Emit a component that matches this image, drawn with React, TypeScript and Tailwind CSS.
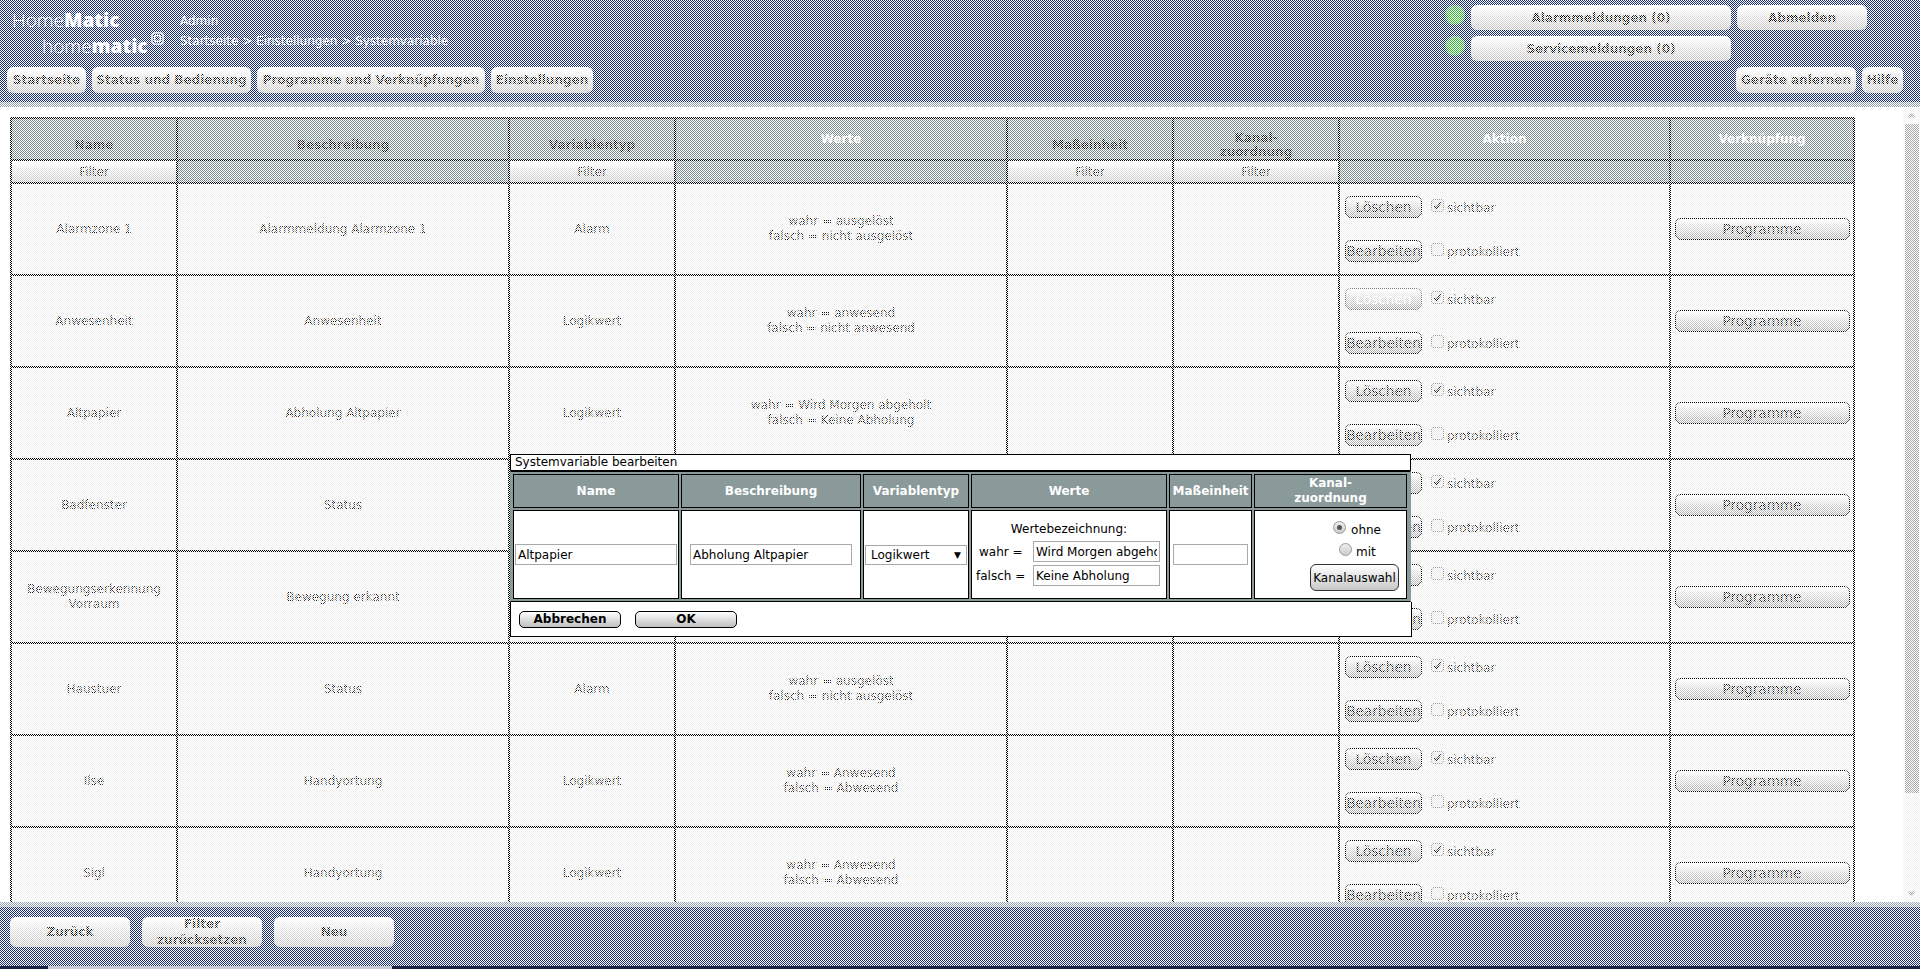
import React from 'react'

const dejavu = "font-['DejaVu_Sans',sans-serif]"

interface Row {
  name: string
  desc: string
  type: string
  values: string[]
  sichtbar: boolean
  deleteOff?: boolean
}

const rows: Row[] = [
  { name: 'Alarmzone 1', desc: 'Alarmmeldung Alarmzone 1', type: 'Alarm', values: ['wahr = ausgelöst', 'falsch = nicht ausgelöst'], sichtbar: true },
  { name: 'Anwesenheit', desc: 'Anwesenheit', type: 'Logikwert', values: ['wahr = anwesend', 'falsch = nicht anwesend'], sichtbar: true, deleteOff: true },
  { name: 'Altpapier', desc: 'Abholung Altpapier', type: 'Logikwert', values: ['wahr = Wird Morgen abgeholt', 'falsch = Keine Abholung'], sichtbar: true },
  { name: 'Badfenster', desc: 'Status', type: 'Alarm', values: ['wahr = offen', 'falsch = geschlossen'], sichtbar: true },
  { name: 'Bewegungserkennung Vorraum', desc: 'Bewegung erkannt', type: 'Alarm', values: ['wahr = ausgelöst', 'falsch = nicht ausgelöst'], sichtbar: false },
  { name: 'Haustuer', desc: 'Status', type: 'Alarm', values: ['wahr = ausgelöst', 'falsch = nicht ausgelöst'], sichtbar: true },
  { name: 'Ilse', desc: 'Handyortung', type: 'Logikwert', values: ['wahr = Anwesend', 'falsch = Abwesend'], sichtbar: true },
  { name: 'Sigl', desc: 'Handyortung', type: 'Logikwert', values: ['wahr = Anwesend', 'falsch = Abwesend'], sichtbar: true },
]

function NavButton({ label, className = '' }: { label: string; className?: string }) {
  return (
    <button className={`flex items-center justify-center rounded-[6px] bg-gradient-to-b from-white to-[#bcbcbc] text-[12px] font-bold text-black ${className}`}>
      {label}
    </button>
  )
}

function RowButton({ label, disabled = false, className = '' }: { label: string; disabled?: boolean; className?: string }) {
  return (
    <button className={`flex h-[22px] items-center justify-center overflow-hidden whitespace-nowrap rounded-[6px] border bg-gradient-to-b from-white to-[#a8a8a8] text-[13.6px] ${disabled ? 'border-[#777] text-white' : 'border-black text-black'} ${className}`}>
      {label}
    </button>
  )
}

function Check({ checked, label }: { checked: boolean; label: string }) {
  return (
    <div className="ml-[9px] flex items-center">
      <span className="relative mb-[3px] flex h-[13px] w-[13px] items-center justify-center rounded-[2px] border border-[#999] bg-[#e8e8e8]">
        {checked && (
          <svg viewBox="0 0 12 12" className="h-[11px] w-[11px]">
            <path d="M2.5 6.5 L5 9 L9.5 2.5" fill="none" stroke="#222" strokeWidth="2" />
          </svg>
        )}
      </span>
      <span className="ml-[3px] mt-[2px] text-[12px] text-[#111]">{label}</span>
    </div>
  )
}

function MainTable() {
  const thDark = 'border-2 border-black bg-[#7b8c8c] pt-[11px] text-[12px] font-bold text-black'
  const thLight = 'border-2 border-black bg-[#7b8c8c] text-[12px] font-bold text-white'
  const filter = 'border-2 border-black bg-gradient-to-b from-white to-[#c0c0c0] p-0 text-center text-[12px] font-normal text-[#111]'
  const blank = 'border-2 border-black bg-[#7b8c8c] p-0'
  const td = 'border-2 border-black bg-[#f0f0f0] text-center text-[12px] leading-[15px] text-[#111]'
  return (
    <table className="ml-[10px] mt-[10px] w-[1843px] table-fixed border-collapse">
      <colgroup>
        <col className="w-[166px]" />
        <col className="w-[332px]" />
        <col className="w-[166px]" />
        <col className="w-[332px]" />
        <col className="w-[166px]" />
        <col className="w-[166px]" />
        <col className="w-[331px]" />
        <col className="w-[184px]" />
      </colgroup>
      <thead>
        <tr className="h-[42px]">
          <th className={thDark}>Name</th>
          <th className={thDark}>Beschreibung</th>
          <th className={thDark}>Variablentyp</th>
          <th className={thLight}>Werte</th>
          <th className={thDark}>Maßeinheit</th>
          <th className={`${thDark} leading-[14px]`}>Kanal-<br />zuordnung</th>
          <th className={thLight}>Aktion</th>
          <th className={thLight}>Verknüpfung</th>
        </tr>
        <tr className="h-[23px]">
          <th className={filter}>Filter</th>
          <th className={blank} />
          <th className={filter}>Filter</th>
          <th className={blank} />
          <th className={filter}>Filter</th>
          <th className={filter}>Filter</th>
          <th className={blank} />
          <th className={blank} />
        </tr>
      </thead>
      <tbody>
        {rows.map((r) => (
          <tr key={r.name} className="h-[92px]">
            <td className={td}>{r.name}</td>
            <td className={td}>{r.desc}</td>
            <td className={td}>{r.type}</td>
            <td className={td}>
              {r.values.map((v) => (
                <div key={v}>{v}</div>
              ))}
            </td>
            <td className={td} />
            <td className={td} />
            <td className={`${td} align-top`}>
              <div className="flex flex-col gap-[22px] pl-[5px] pt-[12px]">
                <div className="flex items-center">
                  <RowButton label="Löschen" disabled={r.deleteOff} className="w-[77px]" />
                  <Check checked={r.sichtbar} label="sichtbar" />
                </div>
                <div className="flex items-center">
                  <RowButton label="Bearbeiten" className="w-[77px]" />
                  <Check checked={false} label="protokolliert" />
                </div>
              </div>
            </td>
            <td className={td}>
              <RowButton label="Programme" className="mx-auto w-[175px]" />
            </td>
          </tr>
        ))}
      </tbody>
    </table>
  )
}

function DialogInput({ value, className = '' }: { value: string; className?: string }) {
  return (
    <input
      readOnly
      value={value}
      className={`h-[21px] border border-[#a9a9a9] bg-white px-[2px] text-[12px] text-black outline-none ${className}`}
    />
  )
}

function Dialog() {
  const head = 'flex items-center justify-center border border-black bg-[#8a9999] text-center text-[12px] font-bold leading-[15px] text-white'
  const cell = 'border border-black bg-white text-[12px] text-black'
  return (
    <div className="absolute left-[510px] top-[454px] w-[902px]">
      <div className="h-[16px] w-[901px] border border-b-0 border-black bg-white pl-[4px] text-[12px] leading-[15px] text-black">
        Systemvariable bearbeiten
      </div>
      <div className="grid w-[901px] grid-cols-[166px_180px_106px_196px_83px_153px] grid-rows-[34px_89px] gap-[2px] border-x border-b border-t-2 border-b-black border-x-[#8a9999] border-t-black bg-[#8a9999] p-[2px]">
        <div className={head}>Name</div>
        <div className={head}>Beschreibung</div>
        <div className={head}>Variablentyp</div>
        <div className={head}>Werte</div>
        <div className={head}>Maßeinheit</div>
        <div className={head}>Kanal-<br />zuordnung</div>
        <div className={`${cell} flex items-center pl-[1px]`}>
          <DialogInput value="Altpapier" className="w-[162px]" />
        </div>
        <div className={`${cell} flex items-center justify-center`}>
          <DialogInput value="Abholung Altpapier" className="w-[162px]" />
        </div>
        <div className={`${cell} flex items-center justify-center`}>
          <div className="relative flex h-[20px] w-[102px] items-center border border-[#a9a9a9] pl-[5px]">
            Logikwert
            <span className="absolute right-[5px] top-[1px] text-[9px] leading-[16px]">▼</span>
          </div>
        </div>
        <div className={`${cell} flex flex-col items-center pt-[11px]`}>
          <div className="h-[19px] leading-[15px]">Wertebezeichnung:</div>
          <div className="ml-[1px] flex h-[21px] w-[187px] items-center self-start">
            <span className="w-[60px] pl-[6px]">wahr =</span>
            <DialogInput value="Wird Morgen abgeholt" className="w-[127px]" />
          </div>
          <div className="ml-[1px] mt-[3px] flex h-[21px] w-[187px] items-center self-start">
            <span className="w-[60px] pl-[3px]">falsch =</span>
            <DialogInput value="Keine Abholung" className="w-[127px]" />
          </div>
        </div>
        <div className={`${cell} flex items-center justify-center`}>
          <DialogInput value="" className="w-[75px]" />
        </div>
        <div className={`${cell} flex flex-col items-end pr-[7px] pt-[9px]`}>
          <div className="mr-[18px] flex h-[19px] items-center">
            <span className="mb-[5px] flex h-[13px] w-[13px] items-center justify-center rounded-full border border-[#999] bg-gradient-to-b from-[#eee] to-[#ccc]">
              <span className="h-[5px] w-[5px] rounded-full bg-[#555]" />
            </span>
            <span className="ml-[5px]">ohne</span>
          </div>
          <div className="mr-[17px] mt-[3px] flex h-[19px] items-center self-end">
            <span className="mb-[4px] h-[13px] w-[13px] rounded-full border border-[#999] bg-gradient-to-b from-[#eee] to-[#ccc]" />
            <span className="ml-[4px] w-[26px]">mit</span>
          </div>
          <button className="mt-[3px] h-[27px] w-[89px] rounded-[6px] border border-[#333] bg-gradient-to-b from-white to-[#c8c8c8] text-[12px] text-black">
            Kanalauswahl
          </button>
        </div>
      </div>
      <div className="flex h-[35px] w-[902px] items-center gap-[14px] border border-t-0 border-black bg-white pl-[8px]">
        <button className="h-[17px] w-[102px] rounded-[5px] border border-black bg-gradient-to-b from-white to-[#c0c0c0] text-[12px] font-bold leading-[13px] text-black">
          Abbrechen
        </button>
        <button className="h-[17px] w-[102px] rounded-[5px] border border-black bg-gradient-to-b from-white to-[#c0c0c0] text-[12px] font-bold leading-[13px] text-black">
          OK
        </button>
      </div>
    </div>
  )
}

function Led() {
  return <span className="mx-auto h-[20px] w-[20px] rounded-full bg-[radial-gradient(circle_at_50%_65%,#39c739,#2aa82a_60%,#7fc77f)]" />
}

export default function App() {
  return (
    <div className={`h-[969px] w-[1920px] overflow-hidden bg-white ${dejavu}`}>
      <div className="relative h-[966px]">
        <header className="flex h-[102px] flex-col bg-[#172b73] text-white">
          <div className="flex h-[67px]">
            <div className="relative w-[180px] shrink-0 font-['Open_Sans',sans-serif]">
              <div className="pl-[12px] pt-[7px] text-[19px] leading-[26px] font-light">
                Home<span className="font-extrabold">Matic</span>
              </div>
              <div className="flex items-start pl-[42px] text-[19px] leading-[26px] font-light">
                home<span className="font-extrabold">matic</span>
                <svg viewBox="0 0 14 14" className="ml-[3px] mt-[-1px] h-[13px] w-[13px]">
                  <rect x="1" y="1" width="12" height="12" rx="2.5" fill="none" stroke="#fff" strokeWidth="1.4" />
                  <rect x="4" y="4" width="6" height="6" rx="1" fill="none" stroke="#fff" strokeWidth="1.4" />
                </svg>
              </div>
            </div>
            <div className="pt-[12px] text-[12px] leading-[18px]">
              <div>Admin</div>
              <div className="mt-[2px]">Startseite &gt; Einstellungen &gt; Systemvariable</div>
            </div>
            <div className="ml-auto mr-[53px] mt-[5px] grid h-[56px] grid-cols-[20px_260px_130px] grid-rows-[25px_25px] gap-x-[6px] gap-y-[6px]">
              <Led />
              <NavButton label="Alarmmeldungen (0)" />
              <NavButton label="Abmelden" />
              <Led />
              <NavButton label="Servicemeldungen (0)" />
            </div>
          </div>
          <nav className="flex h-[26px] gap-[6px] pl-[7px] pr-[17px]">
            <NavButton label="Startseite" className="w-[79px]" />
            <NavButton label="Status und Bedienung" className="w-[159px]" />
            <NavButton label="Programme und Verknüpfungen" className="w-[228px]" />
            <NavButton label="Einstellungen" className="w-[102px]" />
            <NavButton label="Geräte anlernen" className="ml-auto w-[120px]" />
            <NavButton label="Hilfe" className="w-[41px]" />
          </nav>
        </header>
        <div className="h-[5px] bg-[#94a3b4]" />
        <div className="flex h-[795px]">
          <main className="flex-1 overflow-hidden">
            <MainTable />
          </main>
          <div className="flex w-[17px] flex-col items-center bg-[#f1f1f1]">
            <svg viewBox="0 0 10 6" className="my-[6px] h-[5px] w-[9px]">
              <path d="M5 0.5 L9.5 5.5 H7.5 L5 3 L2.5 5.5 H0.5 Z" fill="#505050" />
            </svg>
            <div className="ml-[1px] h-[669px] w-[14px] bg-[#a8a8a8]" />
            <svg viewBox="0 0 10 6" className="mt-auto mb-[6px] h-[5px] w-[9px]">
              <path d="M5 5.5 L9.5 0.5 H7.5 L5 3 L2.5 0.5 H0.5 Z" fill="#505050" />
            </svg>
          </div>
        </div>
        <div className="h-[5px] bg-[#94a3b4]" />
        <footer className="flex h-[59px] items-start gap-[12px] bg-[#172b73] pl-[10px] pt-[10px]">
          <NavButton label="Zurück" className="h-[30px] w-[120px]" />
          <NavButton label="Filter zurücksetzen" className="h-[30px] w-[120px] leading-[16px]" />
          <NavButton label="Neu" className="h-[30px] w-[120px]" />
        </footer>
        <div className="pointer-events-none absolute inset-0 bg-[conic-gradient(#fff_25%,transparent_0_50%,#fff_0_75%,transparent_0)] bg-[length:2px_2px]" />
        <Dialog />
      </div>
      <div className="flex h-[3px] bg-[#1b2140]">
        <div className="w-[48px]" />
        <div className="w-[344px] bg-[#c9c9d6]" />
      </div>
    </div>
  )
}
